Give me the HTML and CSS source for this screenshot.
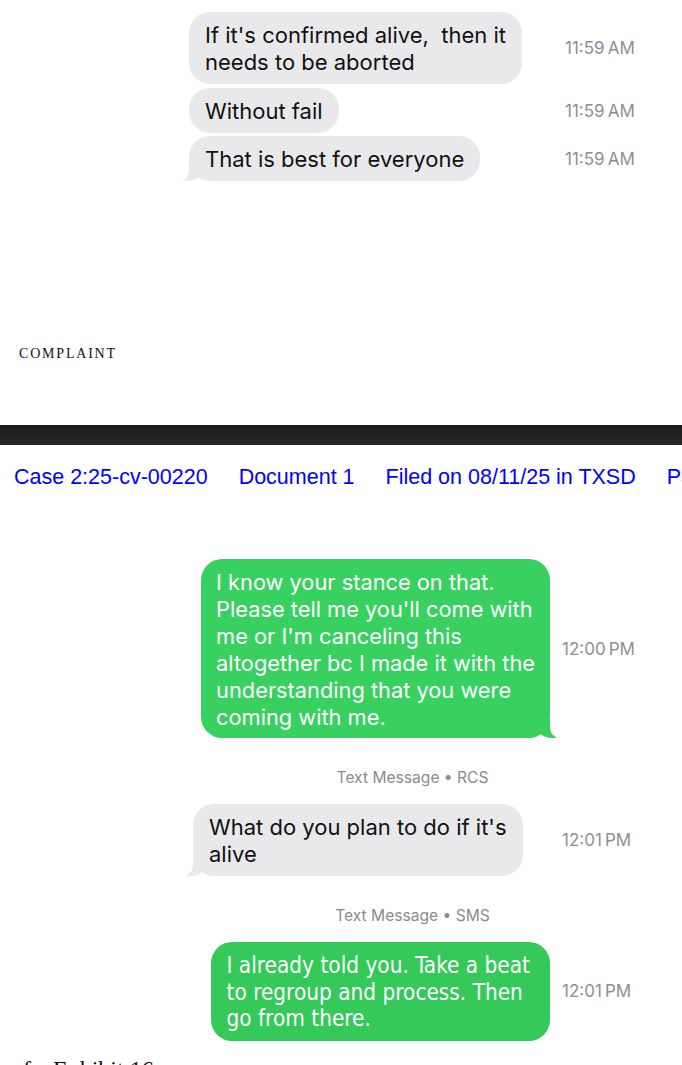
FILE: index.html
```html
<!DOCTYPE html>
<html>

<head>
    <link rel="stylesheet" href="styles.css">
</head>

<body>
    <section class="page1">
        <div class="chat chat-top">
            <div class="row">
                <div class="slot">
                    <div class="bubble in">If it's confirmed alive,&nbsp; then it<br>needs to be aborted</div>
                </div>
                <span class="time">11:59&#8201;AM</span>
            </div>
            <div class="row gap4">
                <div class="slot">
                    <div class="bubble in">Without fail</div>
                </div>
                <span class="time">11:59&#8201;AM</span>
            </div>
            <div class="row gap3">
                <div class="slot">
                    <div class="bubble in tail">That is best for everyone</div>
                </div>
                <span class="time">11:59&#8201;AM</span>
            </div>
        </div>
        <p class="doc-title">COMPLAINT</p>
    </section>

    <div class="page-break"></div>

    <section class="page2">
        <!-- court stamp -->
        <div class="stamp">
            <span>Case 2:25-cv-00220</span>
            <span>Document 1</span>
            <span>Filed on 08/11/25 in TXSD</span>
            <span>Page 33 of 52</span>
        </div>

        <div class="chat chat-bottom">
            <div class="row">
                <div class="slot out">
                    <div class="bubble green tail">I know your stance on that.<br>Please tell me you'll come with<br>me or I'm canceling this<br>altogether bc I made it with the<br>understanding that you were<br>coming with me.</div>
                </div>
                <span class="time">12:00&#8201;PM</span>
            </div>

            <p class="service">Text Message &bull; RCS</p>

            <div class="row">
                <div class="slot">
                    <div class="bubble in tail shift">What do you plan to do if it's<br>alive</div>
                </div>
                <span class="time">12:01&#8201;PM</span>
            </div>

            <p class="service">Text Message &bull; SMS</p>

            <div class="row">
                <div class="slot out">
                    <div class="bubble green narrow">I already told you. Take a beat<br>to regroup and process. Then<br>go from there.</div>
                </div>
                <span class="time">12:01&#8201;PM</span>
            </div>
        </div>

        <p class="footnote"><span class="lead">of</span>Exhibit 16.</p>
    </section>
</body>

</html>
```

FILE: styles.css
```css
* {
    margin: 0;
    padding: 0;
    box-sizing: border-box;
}

body {
    width: 682px;
    background-color: #fff;
    overflow: hidden;
    font-family: Inter, "Liberation Sans", sans-serif;
}

/* first pdf page */
.page1 {
    height: 425px;
    padding-top: 12px;
}

.chat-top {
    padding-left: 189px;
}

.chat-top .slot {
    width: 376px;
}

.row {
    display: flex;
    align-items: center;
}

.gap4 {
    margin-top: 4px;
}

.gap3 {
    margin-top: 3px;
}

.slot {
    display: flex;
}

.slot.out {
    justify-content: flex-end;
    padding-right: 12px;
}

.bubble {
    position: relative;
    font-size: 22px;
    line-height: 27px;
    padding: 10px 16px 8px;
    border-radius: 21px;
    white-space: nowrap;
    color: #111;
}

.bubble.in {
    background-color: #e9e9eb;
}

.bubble.green {
    background-color: #38d15f;
    color: #fff;
    font-size: 21.8px;
    padding: 9.5px 15px 7.5px;
}

.bubble.green.narrow {
    background-color: #35c95a;
    font-family: "Liberation Sans Narrow", "DejaVu Sans Condensed", sans-serif;
    font-size: 22.4px;
    padding: 10px 20px 9px 16px;
    line-height: 26.5px;
}

.bubble.shift {
    margin-left: 5px;
}

/* tails */
.bubble.in.tail::before,
.bubble.green.tail::before {
    content: "";
    position: absolute;
    bottom: 0;
    width: 20px;
    height: 18px;
}

.bubble.in.tail::after,
.bubble.green.tail::after {
    content: "";
    position: absolute;
    bottom: 0;
    width: 12px;
    height: 18px;
    background-color: #fff;
}

.bubble.in.tail::before {
    left: -6px;
    background-color: #e9e9eb;
    border-bottom-right-radius: 16px 14px;
}

.bubble.in.tail::after {
    left: -12px;
    border-bottom-right-radius: 10px;
}

.bubble.green.tail::before {
    right: -6px;
    background-color: #38d15f;
    border-bottom-left-radius: 16px 14px;
}

.bubble.green.tail::after {
    right: -12px;
    border-bottom-left-radius: 10px;
}

.time {
    font-size: 17px;
    color: #8e8e93;
    white-space: nowrap;
}

.doc-title {
    margin-top: 165px;
    padding-left: 19px;
    font-family: "Liberation Serif", serif;
    font-size: 14px;
    line-height: 16px;
    letter-spacing: 1.8px;
    color: #111;
}

.page-break {
    height: 20px;
    background: linear-gradient(#1b1b1b, #282828);
}

/* second pdf page */
.stamp {
    margin-top: 20px;
    padding-left: 14px;
    display: flex;
    gap: 31px;
    white-space: nowrap;
    overflow: hidden;
    font-family: "Liberation Sans", sans-serif;
    font-size: 21.5px;
    line-height: 24px;
    color: #0000ff;
}

.chat-bottom {
    margin-top: 70px;
    padding-left: 188px;
}

.chat-bottom .slot {
    width: 374px;
}

.service {
    margin: 31px 0 17px -45px;
    text-align: center;
    font-size: 15.6px;
    line-height: 18px;
    color: #8a8a8e;
}

.footnote {
    margin-top: 15px;
    padding-left: 11px;
    font-family: "Liberation Serif", serif;
    font-size: 24px;
    line-height: 26px;
    color: #111;
}

.footnote .lead {
    margin-right: 22px;
}
```
